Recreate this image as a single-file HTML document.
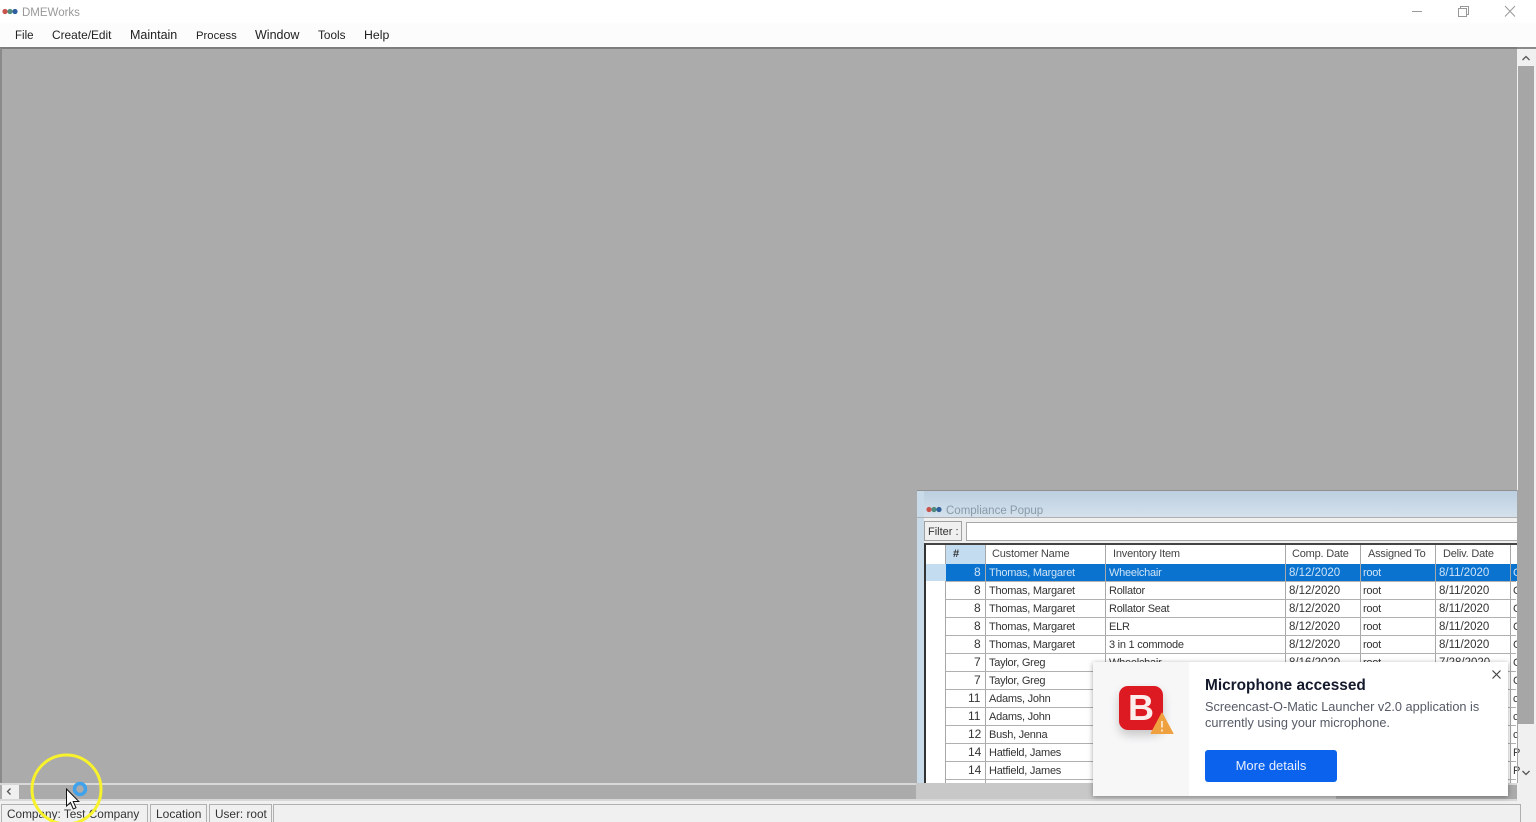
<!DOCTYPE html>
<html><head><meta charset="utf-8"><style>
html,body{margin:0;padding:0;width:1536px;height:822px;overflow:hidden;background:#f0f0f0;font-family:"Liberation Sans",sans-serif;}
body{filter:blur(.35px)}
div,span{position:absolute;white-space:nowrap;box-sizing:border-box}
.m{top:27px;font-size:12px;line-height:16px;color:#222}
.t{font-size:11px;letter-spacing:-.25px;line-height:18px;color:#333;height:18px}
.d{font-size:11.500px;letter-spacing:0}
.n{font-size:12px;letter-spacing:0;line-height:17px}
.s{color:#cfe4f7}
.h{top:544px;font-size:11px;letter-spacing:-.2px;line-height:20px;color:#444}
.st{top:804px;height:18px;background:#f0f0f0;border:1px solid #b0b0b0;border-bottom:0;font-size:11.800px;line-height:18px;color:#333;padding-left:5px}
.v{width:1px;background:#a8a8a8}
.l{height:1px;background:#b0b0b0;left:946px;width:570px}
</style></head><body>
<div style="left:0;top:0;width:1536px;height:23px;background:#fff"></div>
<svg style="position:absolute;left:2px;top:8px" width="16" height="7"><circle cx="3" cy="3.500" r="2.600" fill="#c9544e"/><circle cx="8" cy="3.500" r="2.600" fill="#4f8a7e"/><circle cx="13" cy="3.500" r="2.600" fill="#2f5f9e"/></svg>
<div style="left:22px;top:5px;font-size:11.500px;line-height:16px;color:#999">DMEWorks</div>
<svg style="position:absolute;left:1405px;top:0" width="120" height="23" fill="none" stroke="#999" stroke-width="1"><path d="M7 11.500H17"/><path d="M53.500 8.500h8v8h-8zM55.500 8.500v-2h8v8h-2"/><path d="M100 6l10 10.500M110 6l-10 10.500"/></svg>
<div style="left:0;top:23px;width:1536px;height:24px;background:#fcfcfc"></div>
<div class="m" style="left:15px;top:28px;font-size:11.500px">File</div><div class="m" style="left:52px;font-size:11.900px">Create/Edit</div><div class="m" style="left:130px;font-size:12.500px">Maintain</div><div class="m" style="left:196px;top:28px;font-size:11.300px">Process</div><div class="m" style="left:255px;font-size:12.500px">Window</div><div class="m" style="left:318px;font-size:11.800px">Tools</div><div class="m" style="left:364px;font-size:12.300px">Help</div>

<div style="left:0;top:47px;width:1517px;height:736px;background:#ababab;border-top:2px solid #7d7d7d;border-left:2px solid #8a8a8a"></div>
<div style="left:1517px;top:47px;width:19px;height:753px;background:#f0f0f0;border-top:2px solid #8a8a8a"></div>
<div style="left:1518px;top:66px;width:16px;height:658px;background:#a6a6a6"></div>
<svg style="position:absolute;left:1518px;top:52px" width="16" height="12" fill="none" stroke="#555" stroke-width="1.300"><path d="M4.500 8l3.500-3.500 3.500 3.500"/></svg>
<svg style="position:absolute;left:1518px;top:767px" width="16" height="12" fill="none" stroke="#555" stroke-width="1.300"><path d="M4.500 4l3.500 3.500 3.500-3.500"/></svg>

<div style="left:0;top:783px;width:1517px;height:17px;background:#ababab;border-top:2px solid #d8d8d8"></div>
<div style="left:2px;top:785px;width:17px;height:15px;background:#f0f0f0"></div>
<svg style="position:absolute;left:3px;top:785px" width="12" height="14" fill="none" stroke="#555" stroke-width="1.300"><path d="M7.500 3.500L4.500 6.500l3 3"/></svg>
<div style="left:916px;top:783px;width:420px;height:16px;background:#c8c8c8"></div>
<div style="left:0;top:799px;width:1517px;height:2px;background:#d8d8d8"></div>
<div style="left:0;top:801px;width:1536px;height:21px;background:#f0f0f0"></div>
<div class="st" style="left:1px;width:147px">Company: Test Company</div>
<div class="st" style="left:150px;width:57px;font-size:12px">Location</div>
<div class="st" style="left:209px;width:63px">User: root</div>
<div class="st" style="left:273px;width:1248px"></div>

<!-- Popup -->
<div style="left:917px;top:490px;width:600px;height:293px;background:#f0f0f0;overflow:hidden;border-top:1px solid #909090"></div>
<div style="left:917px;top:491px;width:600px;height:26px;background:linear-gradient(#bccfe0,#d4e1ec)"></div>
<div style="left:917px;top:491px;width:7px;height:292px;background:#c9dbe9"></div>
<div style="left:917px;top:517px;width:600px;height:1px;background:#b0b0b0"></div>
<svg style="position:absolute;left:926px;top:506px" width="16" height="7"><circle cx="3" cy="3.500" r="2.600" fill="#c9544e"/><circle cx="8" cy="3.500" r="2.600" fill="#4f8a7e"/><circle cx="13" cy="3.500" r="2.600" fill="#2f5f9e"/></svg>
<div style="left:946px;top:503px;font-size:11.500px;line-height:16px;color:#8b9aa8">Compliance Popup</div>
<div style="left:924px;top:518px;width:593px;height:25px;background:#f0f0f0"></div>
<div style="left:924px;top:521px;width:38px;height:20px;background:#f0f0f0;border:1px solid #a0a0a0;font-size:11px;line-height:20px;color:#333;padding-left:3px">Filter :</div>
<div style="left:966px;top:522px;width:551px;height:19px;background:#fff;border:1px solid #a8a8a8;border-right:0"></div>
<div style="left:924px;top:543px;width:593px;height:240px;background:#fff;border-top:2px solid #444;border-left:2px solid #333"></div>
<div style="left:926px;top:545px;width:20px;height:238px;background:#fff;border-right:1px solid #a8a8a8"></div>
<div style="left:946px;top:545px;width:40px;height:19px;background:#c4dcf0"></div>
<div style="left:926px;top:564px;width:20px;height:17px;background:#c4dcf0"></div>
<div style="left:946px;top:564px;width:571px;height:17px;background:#0a73cf"></div>
<div class="h" style="left:953px;font-weight:bold;color:#333">#</div>
<div class="h" style="left:992px">Customer Name</div>
<div class="h" style="left:1113px">Inventory Item</div>
<div class="h" style="left:1292px">Comp. Date</div>
<div class="h" style="left:1368px">Assigned To</div>
<div class="h" style="left:1443px">Deliv. Date</div>

<div class="v" style="left:985px;top:545px;height:238px"></div>
<div class="v" style="left:1105px;top:545px;height:238px"></div>
<div class="v" style="left:1285px;top:545px;height:238px"></div>
<div class="v" style="left:1360px;top:545px;height:238px"></div>
<div class="v" style="left:1435px;top:545px;height:238px"></div>
<div class="v" style="left:1510px;top:545px;height:238px"></div>

<div class="l" style="top:599px"></div><div class="l" style="top:617px"></div><div class="l" style="top:635px"></div><div class="l" style="top:653px"></div><div class="l" style="top:671px"></div><div class="l" style="top:689px"></div><div class="l" style="top:707px"></div><div class="l" style="top:725px"></div><div class="l" style="top:743px"></div><div class="l" style="top:761px"></div><div class="l" style="top:779px"></div><div class="l" style="top:581px"></div>

<div class="t n s" style="left:974px;top:564px">8</div><div class="t s" style="left:989px;top:564px">Thomas, Margaret</div><div class="t s" style="left:1109px;top:564px">Wheelchair</div><div class="t d s" style="left:1289px;top:564px">8/12/2020</div><div class="t s" style="left:1363px;top:564px">root</div><div class="t d s" style="left:1439px;top:564px">8/11/2020</div><div class="t s" style="left:1513px;top:564px">C</div>

<div class="t n" style="left:974px;top:582px">8</div><div class="t" style="left:989px;top:582px">Thomas, Margaret</div><div class="t" style="left:1109px;top:582px">Rollator</div><div class="t d" style="left:1289px;top:582px">8/12/2020</div><div class="t" style="left:1363px;top:582px">root</div><div class="t d" style="left:1439px;top:582px">8/11/2020</div><div class="t" style="left:1513px;top:582px">C</div>
<div class="t n" style="left:974px;top:600px">8</div><div class="t" style="left:989px;top:600px">Thomas, Margaret</div><div class="t" style="left:1109px;top:600px">Rollator Seat</div><div class="t d" style="left:1289px;top:600px">8/12/2020</div><div class="t" style="left:1363px;top:600px">root</div><div class="t d" style="left:1439px;top:600px">8/11/2020</div><div class="t" style="left:1513px;top:600px">C</div>
<div class="t n" style="left:974px;top:618px">8</div><div class="t" style="left:989px;top:618px">Thomas, Margaret</div><div class="t" style="left:1109px;top:618px">ELR</div><div class="t d" style="left:1289px;top:618px">8/12/2020</div><div class="t" style="left:1363px;top:618px">root</div><div class="t d" style="left:1439px;top:618px">8/11/2020</div><div class="t" style="left:1513px;top:618px">C</div>
<div class="t n" style="left:974px;top:636px">8</div><div class="t" style="left:989px;top:636px">Thomas, Margaret</div><div class="t" style="left:1109px;top:636px">3 in 1 commode</div><div class="t d" style="left:1289px;top:636px">8/12/2020</div><div class="t" style="left:1363px;top:636px">root</div><div class="t d" style="left:1439px;top:636px">8/11/2020</div><div class="t" style="left:1513px;top:636px">C</div>
<div class="t n" style="left:974px;top:654px">7</div><div class="t" style="left:989px;top:654px">Taylor, Greg</div><div class="t" style="left:1109px;top:654px">Wheelchair</div><div class="t d" style="left:1289px;top:654px">8/16/2020</div><div class="t" style="left:1363px;top:654px">root</div><div class="t d" style="left:1439px;top:654px">7/28/2020</div><div class="t" style="left:1513px;top:654px">C</div>
<div class="t n" style="left:974px;top:672px">7</div><div class="t" style="left:989px;top:672px">Taylor, Greg</div><div class="t" style="left:1513px;top:672px">C</div>
<div class="t n" style="left:968px;top:690px">11</div><div class="t" style="left:989px;top:690px">Adams, John</div><div class="t" style="left:1513px;top:690px">c</div>
<div class="t n" style="left:968px;top:708px">11</div><div class="t" style="left:989px;top:708px">Adams, John</div><div class="t" style="left:1513px;top:708px">c</div>
<div class="t n" style="left:968px;top:726px">12</div><div class="t" style="left:989px;top:726px">Bush, Jenna</div><div class="t" style="left:1513px;top:726px">c</div>
<div class="t n" style="left:968px;top:744px">14</div><div class="t" style="left:989px;top:744px">Hatfield, James</div><div class="t" style="left:1513px;top:744px">P</div>
<div class="t n" style="left:968px;top:762px">14</div><div class="t" style="left:989px;top:762px">Hatfield, James</div><div class="t" style="left:1513px;top:762px">P</div>
<div style="left:1517px;top:490px;width:1px;height:293px;background:#a6a6a6"></div>
<div style="left:1518px;top:490px;width:16px;height:234px;background:#a6a6a6"></div>

<!-- Notification -->
<div style="left:1093px;top:662px;width:415px;height:134px;background:#fff;box-shadow:0 1px 5px rgba(0,0,0,.35)"></div>
<div style="left:1093px;top:662px;width:96px;height:134px;background:#f7f7f8"></div>
<div style="left:1119px;top:686px;width:44px;height:44px;border-radius:9px;background:#dd1a22;box-shadow:0 5px 10px rgba(0,0,0,.2)"></div>
<div style="left:1119px;top:686px;width:44px;height:44px;font-family:'Liberation Sans',sans-serif;font-weight:bold;font-size:36px;line-height:44px;text-align:center;color:#fdeeee">B</div>
<svg style="position:absolute;left:1150px;top:711px" width="24" height="24"><path d="M12 2L23 22.500H1z" fill="#f0a13f" stroke="#f0a13f" stroke-linejoin="round"/><path d="M12 10v6.500M12 18.500v2" stroke="#fbe6c8" stroke-width="1.800"/></svg>
<div style="left:1205px;top:676px;font-size:15.400px;font-weight:bold;line-height:19px;color:#14192b">Microphone accessed</div>
<div style="left:1205px;top:698px;font-size:12.750px;line-height:17px;color:#555a66">Screencast-O-Matic Launcher v2.0 application is</div>
<div style="left:1205px;top:714px;font-size:12.750px;line-height:17px;color:#555a66">currently using your microphone.</div>
<div style="left:1205px;top:750px;width:132px;height:32px;background:#0b62ec;border-radius:3px;color:#e8f0ff;font-size:13px;line-height:31px;text-align:center">More details</div>
<svg style="position:absolute;left:1491px;top:669px" width="11" height="11" fill="none" stroke="#444" stroke-width="1.200"><path d="M1.500 1.500l8 8M9.500 1.500l-8 8"/></svg>

<!-- Cursor highlight -->
<svg style="position:absolute;left:25px;top:748px" width="85" height="74" fill="none">
<circle cx="41.500" cy="41.500" r="34.500" stroke="#f7f22c" stroke-width="3"/>
<circle cx="55" cy="41" r="5.500" stroke="#3fa2ea" stroke-width="3.500"/>
<path d="M41.500 41V58l4-3.500 2.800 6.500 2.700-1.200-2.800-6.300h5.600z" fill="#fff" stroke="#111" stroke-width="1"/>
</svg>
</body></html>
